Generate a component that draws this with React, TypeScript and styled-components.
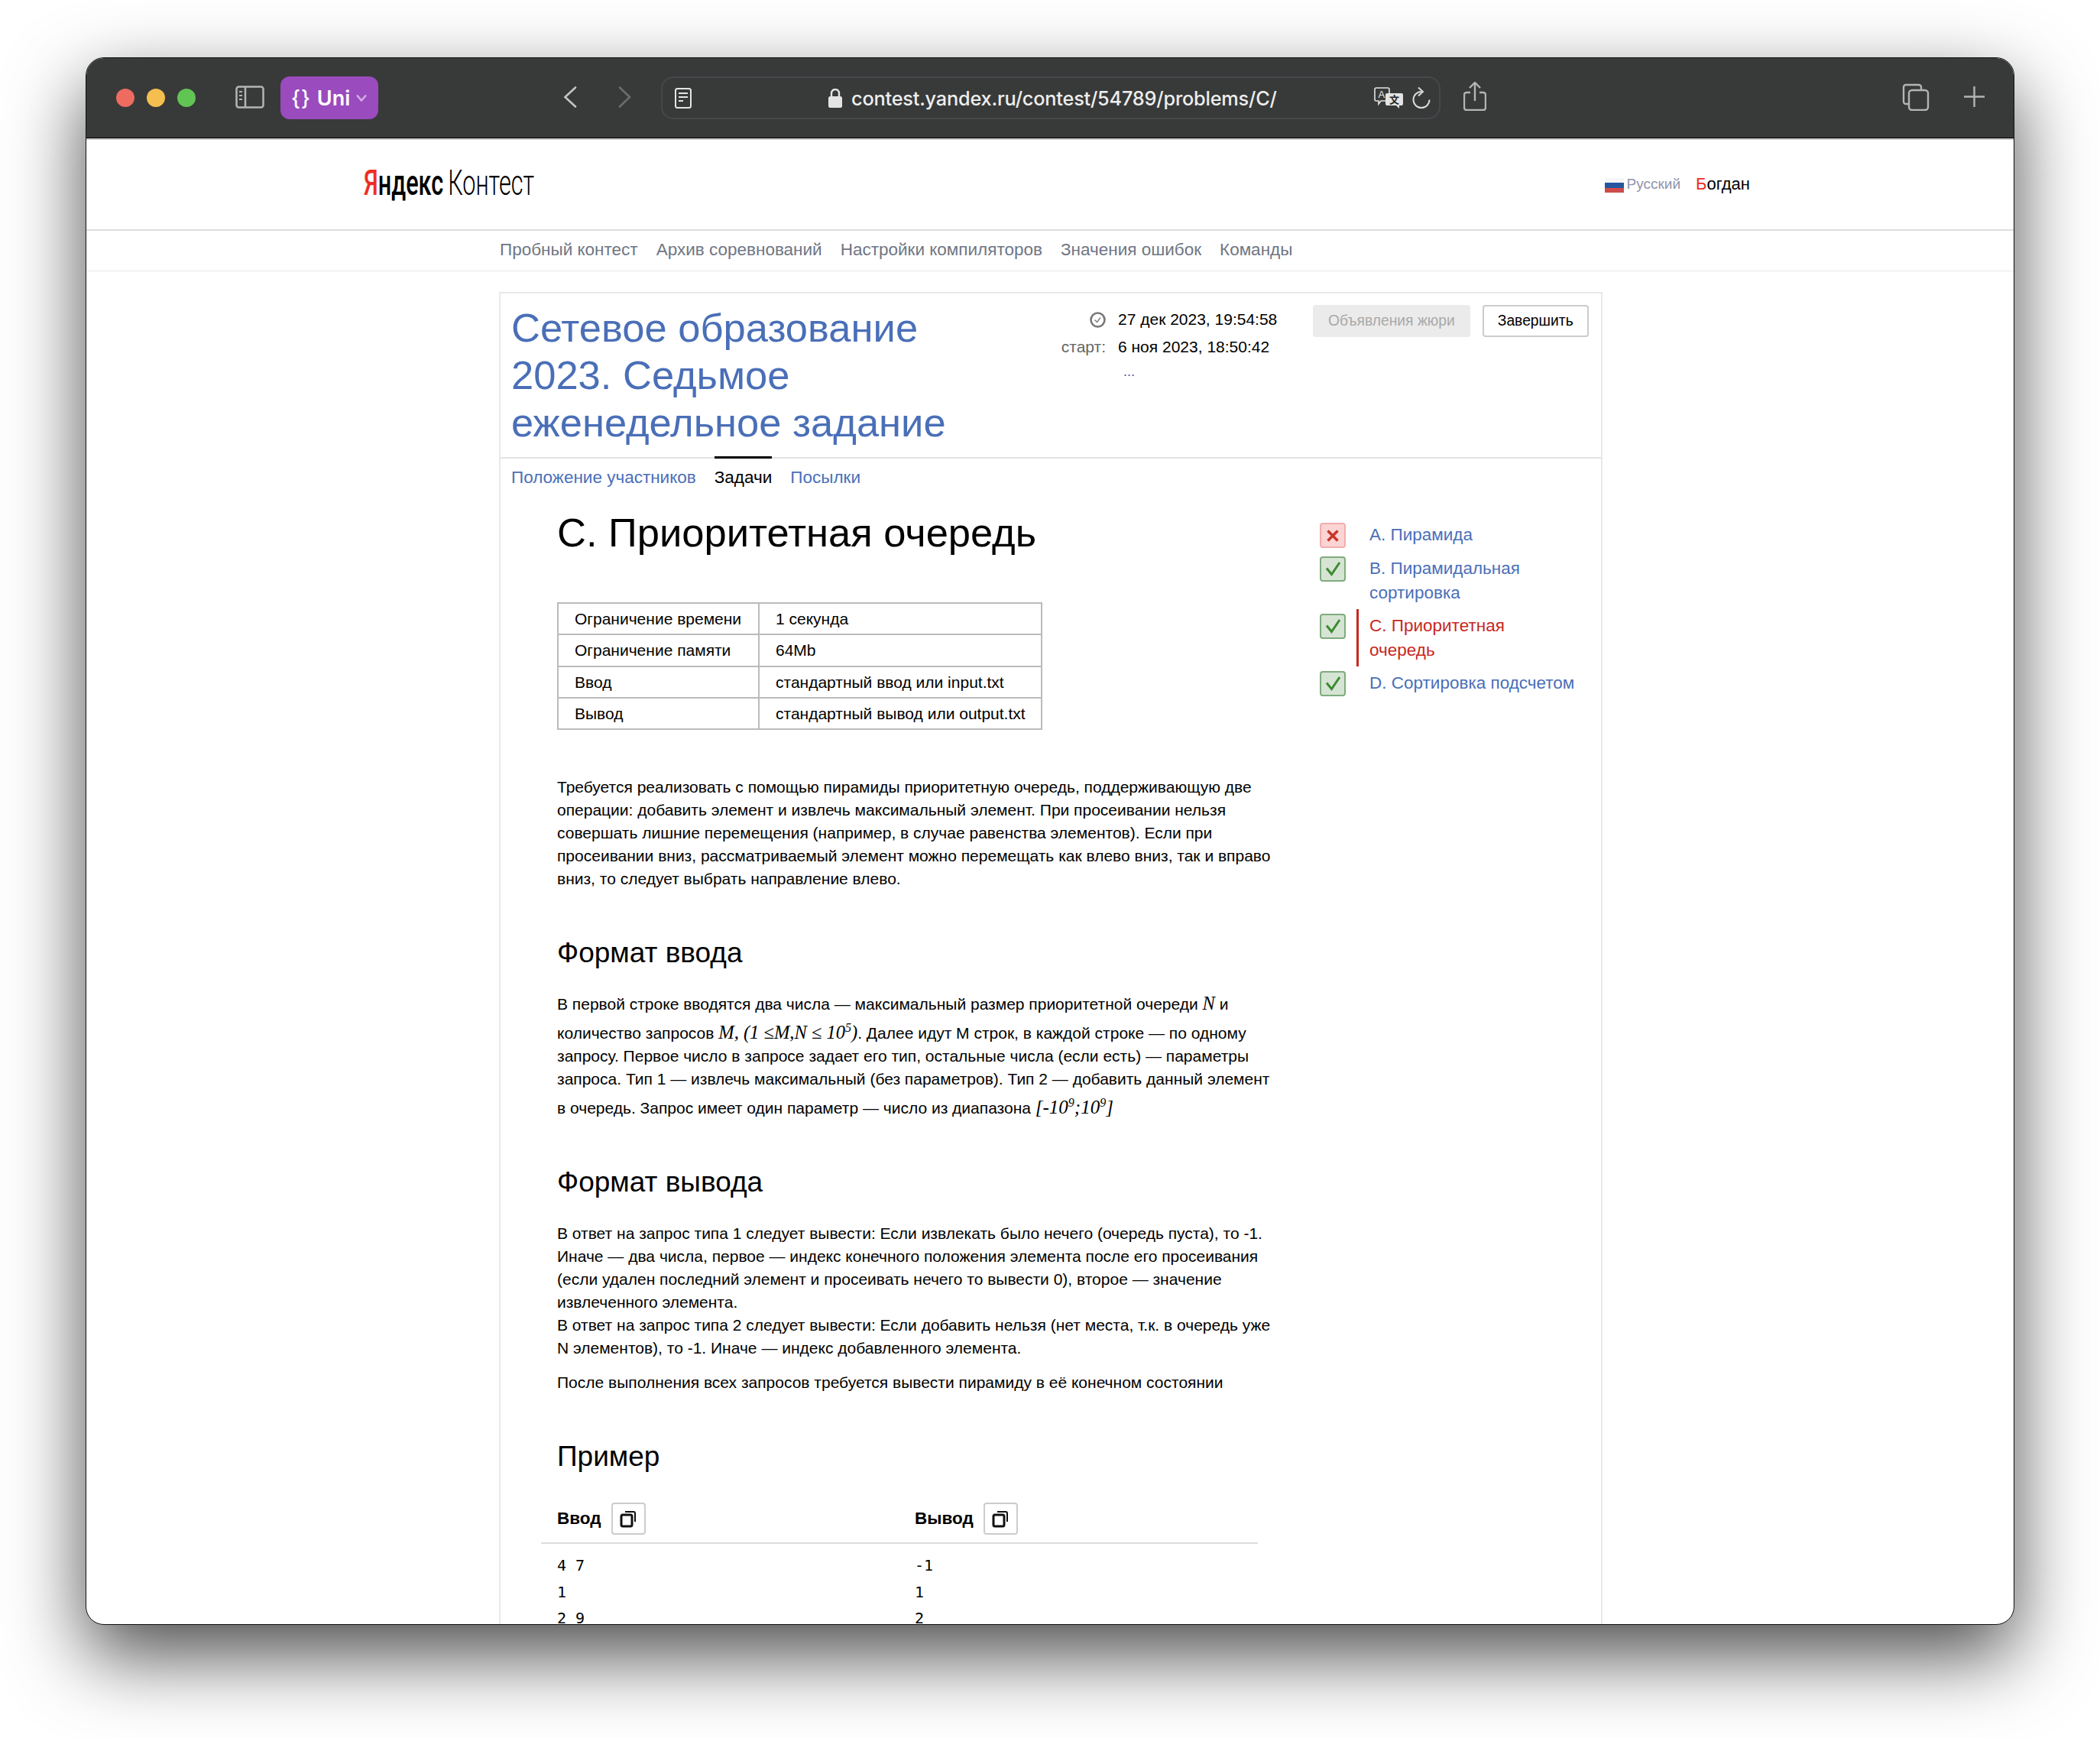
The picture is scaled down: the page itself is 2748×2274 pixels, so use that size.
import React from "react";
import styled, { createGlobalStyle } from "styled-components";

const Global = createGlobalStyle`
  html, body { margin: 0; padding: 0; background: #fff; }
  * { box-sizing: border-box; }
`;

const Stage = styled.div`
  width: 2748px;
  height: 2274px;
  padding: 75px 112px 0;
  background: #fff;
  overflow: hidden;
`;
const Win = styled.div`
  width: 2524px;
  height: 2051px;
  border: 1px solid #111;
  border-radius: 24px;
  overflow: hidden;
  background: #fff;
  box-shadow: 0 40px 100px rgba(0, 0, 0, 0.7);
  font-family: "Liberation Sans", Arial, sans-serif;
  color: #000;
`;
const Toolbar = styled.div`
  height: 105px;
  display: flex;
  align-items: center;
  padding: 0 38px 0 39px;
  background: #383a39;
  border-bottom: 1px solid #000;
  box-shadow: 0 2px 0 #ccc;
`;
const Lights = styled.div`
  display: flex;
  gap: 16px;
  margin-right: 52px;
`;
const Light = styled.span<{ $c: string }>`
  width: 24px;
  height: 24px;
  border-radius: 50%;
  background: ${(p) => p.$c};
`;
const ToolIcon = styled.svg<{ $ml?: number; $auto?: boolean; $mb?: number }>`
  flex: none;
  display: block;
  margin-left: ${(p) => (p.$auto ? "auto" : `${p.$ml ?? 0}px`)};
  margin-bottom: ${(p) => p.$mb ?? 0}px;
`;
const UniBtn = styled.div`
  margin-left: 21px;
  width: 128px;
  height: 56px;
  flex: none;
  border-radius: 12px;
  background: #9a4bbd;
  color: #fff;
  display: flex;
  align-items: center;
  padding-left: 14px;
  font-family: Inter, sans-serif;
  font-weight: 600;
  font-size: 27px;
  gap: 8px;
`;
const Braces = styled.span`
  letter-spacing: 1px;
  font-weight: 500;
`;
const UrlBar = styled.div`
  margin-left: 39px;
  width: 1020px;
  height: 56px;
  flex: none;
  border: 2px solid #45484c;
  border-radius: 16px;
  display: flex;
  align-items: center;
  padding-left: 16px;
`;
const UrlText = styled.span`
  margin-left: 12px;
  font-family: Inter, sans-serif;
  font-weight: 500;
  font-size: 25.3px;
  letter-spacing: -0.2px;
  color: #eee;
  white-space: nowrap;
`;

const TopRow = styled.div`
  height: 119px;
  display: flex;
  align-items: center;
  padding: 0 345px 5px 363px;
  border-bottom: 2px solid #ddd;
  margin-top: 2px;
`;
const Logo = styled.div`
  font-family: Roboto, sans-serif;
  font-size: 46px;
  line-height: 60px;
  white-space: nowrap;
  transform: scaleX(0.665);
  transform-origin: left center;
  display: flex;
  gap: 9px;
`;
const LogoBold = styled.span`
  font-weight: 500;
`;
const LogoLight = styled.span`
  font-weight: 300;
`;
const RedLetter = styled.span`
  color: #ee2e22;
`;
const TopRight = styled.div`
  margin-left: auto;
  margin-top: 3px;
  display: flex;
  align-items: center;
`;
const Flag = styled.span`
  width: 25px;
  height: 19px;
  margin-top: 4px;
  background: linear-gradient(#f6f6f6 0 33%, #27569f 33% 66%, #cf4b4a 66%);
`;
const Lang = styled.span`
  margin-left: 4px;
  font-size: 19px;
  color: #8f95ad;
`;
const User = styled.span`
  margin-left: 20px;
  font-size: 22px;
`;

const Nav = styled.nav`
  height: 53px;
  display: flex;
  align-items: center;
  gap: 24px;
  padding: 0 0 2px 541px;
  border-bottom: 1px solid #e9e9e9;
  font-size: 22.5px;
  color: #6f7684;
`;
const Box = styled.div`
  width: 1444px;
  margin: 27px 0 0 540px;
  border: 2px solid #e9e9e9;
  border-bottom: 0;
`;
const Head = styled.div`
  height: 216px;
  display: flex;
  padding-left: 14px;
  border-bottom: 2px solid #e2e2e2;
`;
const Title = styled.h1`
  margin: 14px 0 0;
  width: 721px;
  padding-right: 90px;
  font-weight: 400;
  font-size: 52.5px;
  line-height: 62px;
  color: #4a6fb8;
`;
const Dates = styled.div`
  padding-top: 16px;
  font-size: 21px;
  width: 328px;
`;
const DateRow = styled.div`
  height: 36px;
  display: flex;
  align-items: center;
`;
const DateLabel = styled.span`
  width: 73px;
  color: #666;
  display: flex;
  justify-content: flex-end;
  padding-right: 16px;
`;
const Dots = styled.div`
  margin-left: 80px;
  line-height: 28px;
  font-size: 18px;
  color: #3a5fb0;
`;
const Buttons = styled.div`
  display: flex;
  gap: 16px;
  padding-top: 15px;
`;
const Btn = styled.div<{ $off?: boolean }>`
  height: 42px;
  padding: 0 18px;
  display: flex;
  align-items: center;
  font-size: 19.3px;
  border-radius: 4px;
  border: 2px solid ${(p) => (p.$off ? "#ebebeb" : "#ccc")};
  background: ${(p) => (p.$off ? "#ebebeb" : "#fff")};
  color: ${(p) => (p.$off ? "#a9a9a9" : "#000")};
`;
const Tabs = styled.div`
  display: flex;
  gap: 24px;
  padding-left: 14px;
  height: 50px;
  font-size: 22.5px;
  line-height: 50px;
`;
const Tab = styled.a<{ $on?: boolean }>`
  color: ${(p) => (p.$on ? "#000" : "#4a6fb8")};
  ${(p) => (p.$on ? "box-shadow: 0 -3px 0 #000;" : "")}
`;
const Body = styled.div`
  display: flex;
  height: 1600px;
`;
const Statement = styled.div`
  width: 998px;
  padding-left: 74px;
  flex: none;
`;
const ProblemTitle = styled.h2`
  margin: 16px 0 0;
  font-weight: 400;
  font-size: 52.5px;
  line-height: 62px;
`;
const LimitTable = styled.div`
  margin-top: 60px;
  width: 635px;
  border: 2px solid #bbb;
  border-bottom: 0;
  font-size: 21px;
`;
const LimitRow = styled.div`
  display: grid;
  grid-template-columns: 261px 1fr;
  height: 41.25px;
  line-height: 39.25px;
  border-bottom: 2px solid #bbb;
`;
const LimitCell = styled.div`
  padding-left: 21px;
  & + & {
    border-left: 2px solid #bbb;
  }
`;
const Para = styled.p<{ $mt: number }>`
  margin: ${(p) => p.$mt}px 0 0;
  font-size: 21px;
  line-height: 30px;
  white-space: nowrap;
`;
const TallLine = styled.span`
  display: block;
  padding-top: 8px;
`;
const Math = styled.span<{ $big?: boolean }>`
  font-family: "Liberation Serif", serif;
  font-style: italic;
  font-size: ${(p) => (p.$big ? 25 : 24.5)}px;
  line-height: 0;
  sup {
    font-size: 16px;
    line-height: 0;
  }
`;
const Section = styled.h3<{ $mt: number }>`
  margin: ${(p) => p.$mt}px 0 0;
  font-weight: 400;
  font-size: 37px;
  line-height: 44px;
`;
const Example = styled.div`
  margin: 38px 0 0 -21px;
  width: 938px;
`;
const ExampleHead = styled.div`
  display: grid;
  grid-template-columns: 468px 1fr;
  padding: 0 0 10px 21px;
  border-bottom: 2px solid #ddd;
`;
const ExampleTitle = styled.div`
  display: flex;
  align-items: center;
  gap: 13px;
  font-size: 22.5px;
  font-weight: 700;
  height: 42px;
`;
const CopyBtn = styled.div`
  width: 45px;
  height: 42px;
  border: 2px solid #ccc;
  border-radius: 4px;
  display: flex;
  align-items: center;
  justify-content: center;
`;
const Samples = styled.div`
  display: grid;
  grid-template-columns: 468px 1fr;
  padding: 11px 0 0 21px;
`;
const Pre = styled.pre`
  margin: 0;
  font-family: "DejaVu Sans Mono", monospace;
  font-size: 20px;
  line-height: 34.5px;
`;
const Side = styled.ul`
  list-style: none;
  margin: 28px 0 0 74px;
  padding: 0;
  width: 360px;
`;
const SideItem = styled.li`
  display: flex;
  align-items: flex-start;
  padding: 6px 0 5px;
`;
const Mark = styled.span<{ $bad?: boolean }>`
  flex: none;
  width: 34px;
  height: 33px;
  margin: 0 14px -0.5px 0;
  border-radius: 4px;
  border: 2px solid ${(p) => (p.$bad ? "#f3adad" : "#7fac7c")};
  background: ${(p) => (p.$bad ? "#fbd4d4" : "#d6e4d4")};
  display: flex;
  align-items: center;
  justify-content: center;
`;
const SideLink = styled.a<{ $active?: boolean }>`
  display: block;
  margin: -6px 0 -5px;
  padding: 6px 0 5px 14px;
  border-left: 3px solid ${(p) => (p.$active ? "#c8281e" : "transparent")};
  font-size: 22.5px;
  line-height: 32px;
  color: ${(p) => (p.$active ? "#c8281e" : "#4a6fb8")};
`;

const Check = () => (
  <svg width="22" height="22" viewBox="0 0 22 22" fill="none">
    <path d="M3 10.5l6.5 8L20 3" stroke="#3d8b32" strokeWidth="3" />
  </svg>
);
const Cross = () => (
  <svg width="18" height="18" viewBox="0 0 18 18" fill="none">
    <path d="M2.5 2.5l13 13M15.5 2.5l-13 13" stroke="#c8352a" strokeWidth="3.5" />
  </svg>
);
const CopyIcon = () => (
  <svg width="24" height="24" viewBox="0 0 24 24" fill="none" stroke="#111">
    <rect x="3" y="7" width="14" height="15" rx="2" strokeWidth="3" />
    <path d="M8 3h11a2 2 0 0 1 2 2v11" strokeWidth="2" />
  </svg>
);

export default function App() {
  return (
    <Stage>
      <Global />
      <Win>
        <Toolbar>
          <Lights>
            <Light $c="#ee6b5f" />
            <Light $c="#f5bf4f" />
            <Light $c="#61c554" />
          </Lights>
          <ToolIcon $mb={2} width="38" height="30" viewBox="0 0 38 30" fill="none" stroke="#b4b4b4">
            <rect x="1.5" y="1.5" width="35" height="27" rx="3" strokeWidth="2.5" />
            <path d="M13 2v26" strokeWidth="2.5" />
            <path d="M5 8h4M5 13h4M5 18h4" strokeWidth="2" />
          </ToolIcon>
          <UniBtn>
            <Braces>{"{}"}</Braces>
            <span>Uni</span>
            <svg width="14" height="10" viewBox="0 0 14 10" fill="none">
              <path d="M1 1.5l6 7 6-7" stroke="#d3aee6" strokeWidth="2.5" />
            </svg>
          </UniBtn>
          <ToolIcon $ml={242} $mb={2} width="18" height="28" viewBox="0 0 18 28" fill="none">
            <path d="M16 1.5L2.5 14 16 26.5" stroke="#c4c4c4" strokeWidth="2.6" strokeLinecap="round" />
          </ToolIcon>
          <ToolIcon $ml={54} $mb={2} width="17" height="28" viewBox="0 0 17 28" fill="none">
            <path d="M2 1.5L15 14 2 26.5" stroke="#6b6d6c" strokeWidth="2.6" strokeLinecap="round" />
          </ToolIcon>
          <UrlBar>
            <svg width="22" height="27" viewBox="0 0 22 27" fill="none" stroke="#e4e4e4">
              <rect x="1" y="1" width="20" height="25" rx="2.5" strokeWidth="2" />
              <path d="M5 7h12M5 12h12M5 17h6" strokeWidth="2" />
            </svg>
            <svg width="18" height="25" viewBox="0 0 18 25" style={{ marginLeft: 179 }}>
              <rect x="0" y="10" width="18" height="15" rx="2.5" fill="#e4e4e4" />
              <path d="M4 11V6a5 5 0 0 1 10 0v5" fill="none" stroke="#e4e4e4" strokeWidth="2.4" />
            </svg>
            <UrlText>contest.yandex.ru/contest/54789/problems/C/</UrlText>
            <svg width="38" height="28" viewBox="0 0 38 28" style={{ marginLeft: "auto" }}>
              <path d="M3 1h15a2 2 0 0 1 2 2v13a2 2 0 0 1-2 2H9l-3 4v-4H3a2 2 0 0 1-2-2V3a2 2 0 0 1 2-2z" fill="#383a39" stroke="#e4e4e4" strokeWidth="1.6" />
              <text x="5.5" y="14" fontSize="13" fontFamily="Liberation Sans" fill="#e4e4e4">A</text>
              <path d="M17 8h19a2 2 0 0 1 2 2v12a2 2 0 0 1-2 2h-3v4l-4-4H17a2 2 0 0 1-2-2V10a2 2 0 0 1 2-2z" fill="#e4e4e4" />
              <text x="20" y="21" fontSize="13" fontWeight="700" fontFamily="Noto Sans CJK SC" fill="#222">文</text>
            </svg>
            <svg width="24" height="28" viewBox="0 0 24 28" fill="none" style={{ marginLeft: 12, marginRight: 11 }}>
              <path d="M12 6a10.5 10.5 0 1 0 10.5 10.5" stroke="#d8d8d8" strokeWidth="2" />
              <path d="M8 0.5l6 5.5-6 5.5" stroke="#d8d8d8" strokeWidth="2" />
            </svg>
          </UrlBar>
          <ToolIcon $ml={30} $mb={5} width="30" height="38" viewBox="0 0 30 38" fill="none" stroke="#b4b4b4" strokeWidth="2.4">
            <path d="M9 14H4a3 3 0 0 0-3 3v17a3 3 0 0 0 3 3h22a3 3 0 0 0 3-3V17a3 3 0 0 0-3-3h-5" />
            <path d="M15 25V2M8 8l7-7 7 7" />
          </ToolIcon>
          <ToolIcon $auto $mb={3} width="36" height="36" viewBox="0 0 36 36" fill="none" stroke="#b4b4b4" strokeWidth="2.4">
            <path d="M8 27H5a3 3 0 0 1-3-3V5a3 3 0 0 1 3-3h17a3 3 0 0 1 3 3v3" />
            <rect x="9" y="9" width="25" height="26" rx="4" />
          </ToolIcon>
          <ToolIcon $ml={45} $mb={3} width="27" height="27" viewBox="0 0 27 27" fill="none" stroke="#b4b4b4" strokeWidth="2.4">
            <path d="M13.5 0v27M0 13.5h27" />
          </ToolIcon>
        </Toolbar>
        <TopRow>
          <Logo>
            <LogoBold>
              <RedLetter>Я</RedLetter>ндекс
            </LogoBold>
            <LogoLight>Контест</LogoLight>
          </Logo>
          <TopRight>
            <Flag />
            <Lang>Русский</Lang>
            <User>
              <RedLetter>Б</RedLetter>огдан
            </User>
          </TopRight>
        </TopRow>
        <Nav>
          <span>Пробный контест</span>
          <span>Архив соревнований</span>
          <span>Настройки компиляторов</span>
          <span>Значения ошибок</span>
          <span>Команды</span>
        </Nav>
        <Box>
          <Head>
            <Title>Сетевое образование 2023. Седьмое еженедельное задание</Title>
            <Dates>
              <DateRow>
                <DateLabel>
                  <svg width="21" height="21" viewBox="0 0 21 21" fill="none">
                    <circle cx="10.5" cy="10.5" r="9" stroke="#777" strokeWidth="2.6" />
                    <path d="M6.5 10.5l3 3 4.5-6" stroke="#777" strokeWidth="1.4" />
                  </svg>
                </DateLabel>
                27 дек 2023, 19:54:58
              </DateRow>
              <DateRow>
                <DateLabel>старт:</DateLabel>6 ноя 2023, 18:50:42
              </DateRow>
              <Dots>...</Dots>
            </Dates>
            <Buttons>
              <Btn $off>Объявления жюри</Btn>
              <Btn>Завершить</Btn>
            </Buttons>
          </Head>
          <Tabs>
            <Tab>Положение участников</Tab>
            <Tab $on>Задачи</Tab>
            <Tab>Посылки</Tab>
          </Tabs>
          <Body>
            <Statement>
              <ProblemTitle>C. Приоритетная очередь</ProblemTitle>
              <LimitTable>
                <LimitRow>
                  <LimitCell>Ограничение времени</LimitCell>
                  <LimitCell>1 секунда</LimitCell>
                </LimitRow>
                <LimitRow>
                  <LimitCell>Ограничение памяти</LimitCell>
                  <LimitCell>64Mb</LimitCell>
                </LimitRow>
                <LimitRow>
                  <LimitCell>Ввод</LimitCell>
                  <LimitCell>стандартный ввод или input.txt</LimitCell>
                </LimitRow>
                <LimitRow>
                  <LimitCell>Вывод</LimitCell>
                  <LimitCell>стандартный вывод или output.txt</LimitCell>
                </LimitRow>
              </LimitTable>
              <Para $mt={60}>
                Требуется реализовать с помощью пирамиды приоритетную очередь, поддерживающую две
                <br />
                операции: добавить элемент и извлечь максимальный элемент. При просеивании нельзя
                <br />
                совершать лишние перемещения (например, в случае равенства элементов). Если при
                <br />
                просеивании вниз, рассматриваемый элемент можно перемещать как влево вниз, так и вправо
                <br />
                вниз, то следует выбрать направление влево.
              </Para>
              <Section $mt={60}>Формат ввода</Section>
              <Para $mt={30}>
                В первой строке вводятся два числа — максимальный размер приоритетной очереди <Math>N</Math> и
                <TallLine>
                  количество запросов <Math>M, (1 ≤M,N ≤ 10<sup>5</sup>)</Math>. Далее идут M строк, в каждой строке — по одному
                </TallLine>
                запросу. Первое число в запросе задает его тип, остальные числа (если есть) — параметры
                <br />
                запроса. Тип 1 — извлечь максимальный (без параметров). Тип 2 — добавить данный элемент
                <TallLine>
                  в очередь. Запрос имеет один параметр — число из диапазона <Math $big>[-10<sup>9</sup>;10<sup>9</sup>]</Math>
                </TallLine>
              </Para>
              <Section $mt={60}>Формат вывода</Section>
              <Para $mt={30}>
                В ответ на запрос типа 1 следует вывести: Если извлекать было нечего (очередь пуста), то -1.
                <br />
                Иначе — два числа, первое — индекс конечного положения элемента после его просеивания
                <br />
                (если удален последний элемент и просеивать нечего то вывести 0), второе — значение
                <br />
                извлеченного элемента.
                <br />
                В ответ на запрос типа 2 следует вывести: Если добавить нельзя (нет места, т.к. в очередь уже
                <br />
                N элементов), то -1. Иначе — индекс добавленного элемента.
              </Para>
              <Para $mt={15}>После выполнения всех запросов требуется вывести пирамиду в её конечном состоянии</Para>
              <Section $mt={60}>Пример</Section>
              <Example>
                <ExampleHead>
                  <ExampleTitle>
                    Ввод
                    <CopyBtn>
                      <CopyIcon />
                    </CopyBtn>
                  </ExampleTitle>
                  <ExampleTitle>
                    Вывод
                    <CopyBtn>
                      <CopyIcon />
                    </CopyBtn>
                  </ExampleTitle>
                </ExampleHead>
                <Samples>
                  <Pre>{"4 7\n1\n2 9\n"}</Pre>
                  <Pre>{"-1\n1\n2\n"}</Pre>
                </Samples>
              </Example>
            </Statement>
            <Side>
              <SideItem>
                <Mark $bad>
                  <Cross />
                </Mark>
                <SideLink>A. Пирамида</SideLink>
              </SideItem>
              <SideItem>
                <Mark>
                  <Check />
                </Mark>
                <SideLink>
                  B. Пирамидальная
                  <br />
                  сортировка
                </SideLink>
              </SideItem>
              <SideItem>
                <Mark>
                  <Check />
                </Mark>
                <SideLink $active>
                  C. Приоритетная
                  <br />
                  очередь
                </SideLink>
              </SideItem>
              <SideItem>
                <Mark>
                  <Check />
                </Mark>
                <SideLink>D. Сортировка подсчетом</SideLink>
              </SideItem>
            </Side>
          </Body>
        </Box>
      </Win>
    </Stage>
  );
}
